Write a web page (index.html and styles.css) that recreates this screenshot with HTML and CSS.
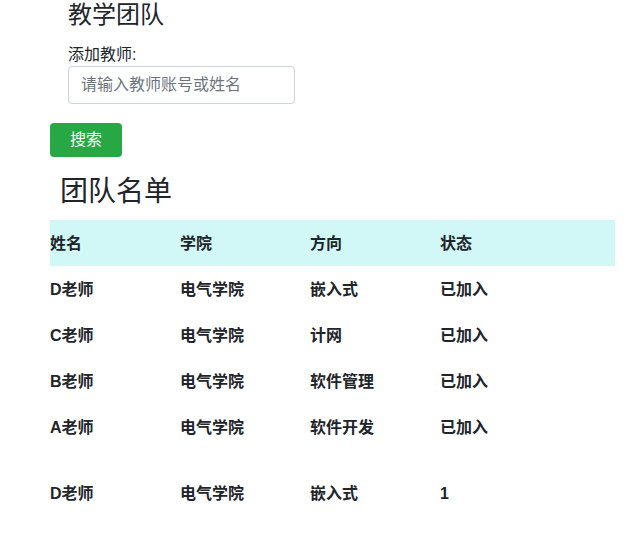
FILE: index.html
```html
<!DOCTYPE html>
<html lang="zh">
<head>
<meta charset="utf-8">
<title>教学团队</title>
<link rel="stylesheet" href="styles.css">
</head>
<body>
<div class="page">
  <section class="add">
    <h3 class="title">教学团队</h3>
    <label class="label" for="teacher">添加教师:</label>
    <input id="teacher" class="input" type="text" placeholder="请输入教师账号或姓名">
  </section>
  <button class="btn" type="button">搜索</button>
  <h2 class="list-title">团队名单</h2>
  <table class="roster">
    <colgroup>
      <col class="c1"><col class="c2"><col class="c3"><col class="c4">
    </colgroup>
    <thead>
      <tr><th>姓名</th><th>学院</th><th>方向</th><th>状态</th></tr>
    </thead>
    <tbody>
      <tr><td>D老师</td><td>电气学院</td><td>嵌入式</td><td>已加入</td></tr>
      <tr><td>C老师</td><td>电气学院</td><td>计网</td><td>已加入</td></tr>
      <tr><td>B老师</td><td>电气学院</td><td>软件管理</td><td>已加入</td></tr>
      <tr><td>A老师</td><td>电气学院</td><td>软件开发</td><td>已加入</td></tr>
      <tr class="spacer"><td colspan="4"></td></tr>
      <tr><td>D老师</td><td>电气学院</td><td>嵌入式</td><td>1</td></tr>
    </tbody>
  </table>
</div>
</body>
</html>
```

FILE: styles.css
```css
html, body {
  margin: 0;
  padding: 0;
  background: #ffffff;
}
body {
  font-family: "Liberation Sans", "Noto Sans CJK SC", sans-serif;
  color: #212529;
  font-size: 16px;
}
.page {
  padding: 0 0 0 50px;
}
.add {
  display: flex;
  flex-direction: column;
  align-items: flex-start;
  padding-left: 18px;
}
.title {
  margin: 0;
  font-size: 24px;
  font-weight: 400;
  line-height: 29px;
}
.label {
  margin-top: 15px;
  line-height: 22px;
  font-size: 16px;
}
.input {
  box-sizing: border-box;
  width: 227px;
  height: 38px;
  margin: 0;
  padding: 0 12px;
  border: 1px solid #ced4da;
  border-radius: 4px;
  font-family: inherit;
  font-size: 16px;
  color: #495057;
}
.input::placeholder {
  color: #6c757d;
}
.btn {
  display: block;
  box-sizing: border-box;
  width: 72px;
  height: 34px;
  margin: 19px 0 0 0;
  padding: 0;
  border: none;
  border-radius: 4px;
  background: #28a745;
  color: #ffffff;
  font-family: inherit;
  font-size: 16px;
  line-height: 34px;
}
.list-title {
  margin: 18px 0 0 10px;
  font-size: 28px;
  font-weight: 400;
  line-height: 34px;
}
.roster {
  margin-top: 11px;
  width: 565px;
  border-collapse: collapse;
  border-spacing: 0;
}
.c1, .c2, .c3 { width: 130px; }
.c4 { width: 175px; }
.roster th, .roster td {
  height: 44px;
  padding: 2px 0 0 0;
  text-align: left;
  vertical-align: middle;
  font-weight: 700;
  font-size: 16px;
  line-height: 20px;
}
.roster thead tr {
  background: #d1f7f6;
}
.roster tr.spacer td {
  height: 20px;
  padding: 0;
}
```
